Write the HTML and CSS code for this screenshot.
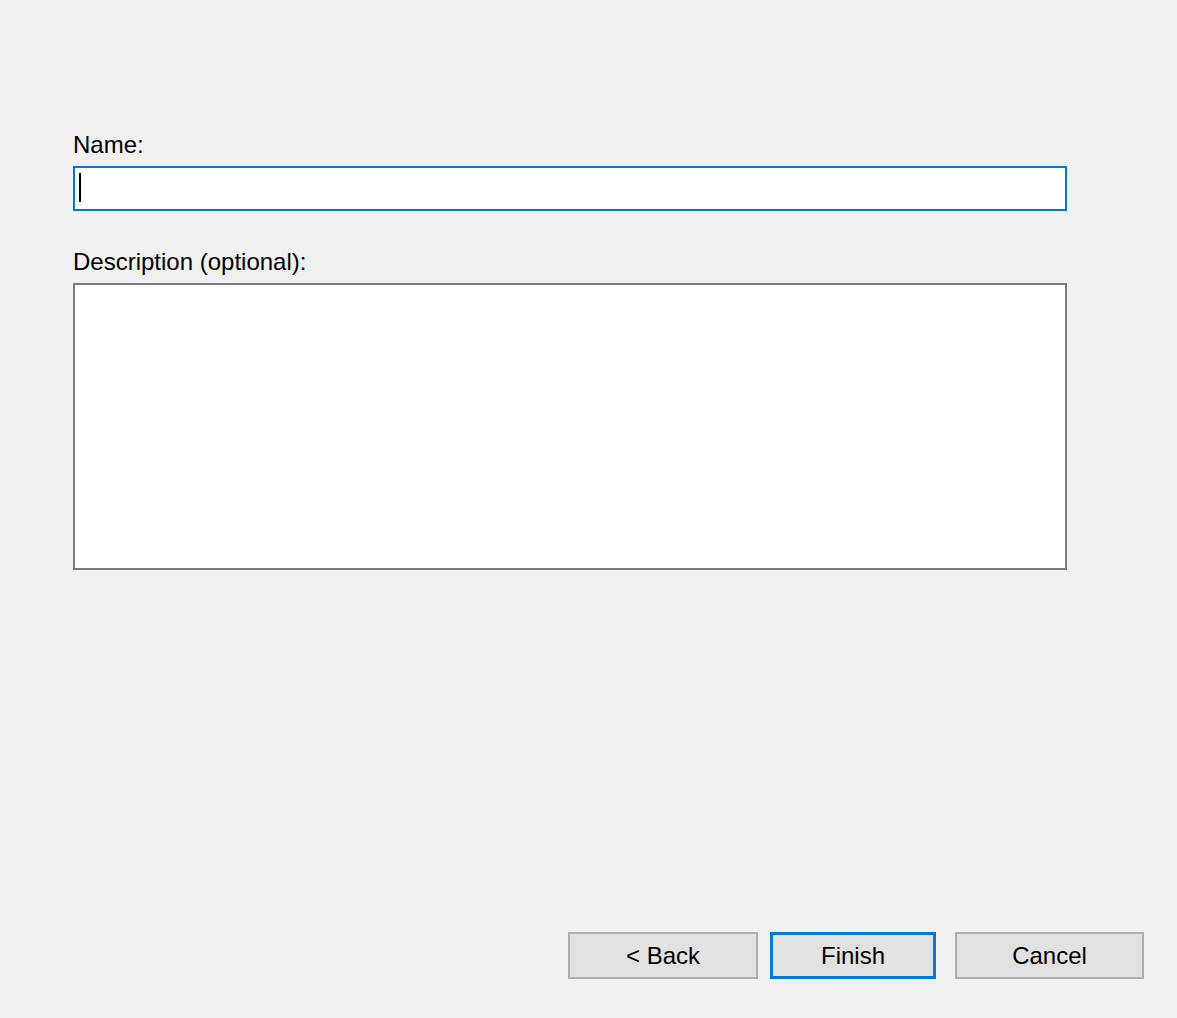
FILE: index.html
```html
<!DOCTYPE html>
<html lang="en">
<head>
<meta charset="UTF-8">
<title>New Item - Wizard</title>
<link rel="stylesheet" href="styles.css">
</head>
<body>
<div class="form">
  <div class="label">Name:</div>
  <div class="field focused"><span class="caret"></span></div>

  <div class="label desc-label">Description (optional):</div>
  <div class="field area"></div>
</div>

<!-- wizard buttons at the bottom right -->
<div class="actions">
  <button class="btn back">&lt; Back</button>
  <button class="btn finish">Finish</button>
  <button class="btn cancel">Cancel</button>
</div>
</body>
</html>
```

FILE: styles.css
```css
/* whole window: grey dialog background */
body {
  margin: 0;
  height: 100vh;
  display: flex;
  flex-direction: column;
  background-color: #f0f0f0;
  color: #000;
  font-family: "Liberation Sans", Arial, sans-serif;
  font-size: 24px;
}
.form {
  padding: 131px 0 0 73px;
}
.label {
  line-height: 28px;
  margin-bottom: 7px;
}
.desc-label {
  margin-top: 37px;
}
/* text boxes */
.field {
  box-sizing: border-box;
  width: 994px;
  height: 45px;
  background-color: #fff;
  border: 2px solid #7a7a7a;
  padding: 5px 4px;
}
.field.focused {
  border-color: #0078d7;
}
.field.area {
  height: 287px;
}
/* blinking cursor in the name box */
.caret {
  display: block;
  width: 2px;
  height: 29px;
  background-color: #000;
}
/* bottom button row */
.actions {
  margin-top: auto;
  display: flex;
  justify-content: flex-end;
  padding: 0 33px 39px 0;
}
.btn {
  box-sizing: border-box;
  height: 47px;
  background-color: #e1e1e1;
  border: 2px solid #adadad;
  font-family: inherit;
  font-size: 24px;
  color: #000;
  padding: 0;
}
.back {
  width: 190px;
}
.finish {
  width: 166px;
  margin-left: 12px;
  border: 3px solid #0078d7;
}
.cancel {
  width: 189px;
  margin-left: 19px;
}
```
